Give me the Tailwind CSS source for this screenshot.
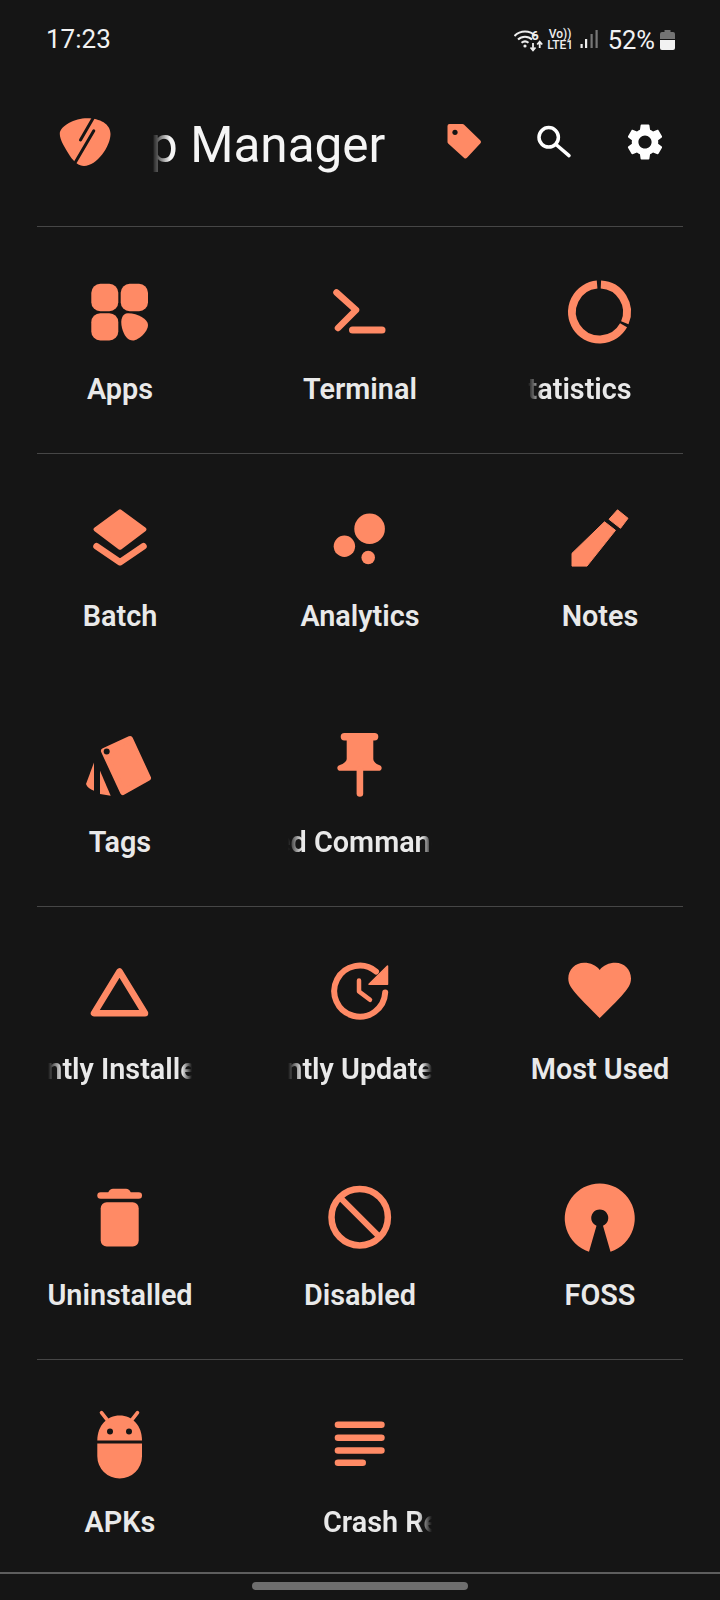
<!DOCTYPE html>
<html lang="en">
  <head>
    <meta charset="UTF-8" />
    <meta name="viewport" content="width=device-width, initial-scale=1.0" />
    <title>App Manager</title>
    <script src="https://cdn.jsdelivr.net/npm/@tailwindcss/browser@4"></script>
  </head>
  <body class="bg-[#151515]">
    <div class="w-[720px] h-[1600px] bg-[#151515] overflow-hidden font-['Roboto',sans-serif] text-[#e9e9e9]">
      <!-- Status bar -->
      <div class="h-[80px] flex items-center pl-[46px] pr-[45px]">
        <span class="mb-[2px] text-[26px] text-[#f2f2f2]">17:23</span>
        <div class="ml-auto flex items-center text-[#eeeeee]">
          <svg width="30" height="24" viewBox="0 0 30 24" fill="none" stroke="currentColor" stroke-width="2">
            <path d="M.5 8A14.5 14.5 0 0 1 21.5 8" />
            <path d="M4 11.5A10 10 0 0 1 18 11.5" />
            <path d="M7.5 14.8A5.5 5.5 0 0 1 14.5 14.8" />
            <circle cx="11" cy="18" r="1.6" fill="currentColor" stroke="none" />
            <path d="M19 15v7M16.5 19.5l2.5 2.8 2.5-2.8M25.7 20v-6.500M23.200 16.500l2.500-2.800 2.500 2.800" stroke-width="1.800" />
            <text x="21" y="11.500" font-size="13" font-weight="700" text-anchor="middle" fill="currentColor" stroke="none">6</text>
          </svg>
          <div class="ml-[4px] w-[25px] flex flex-col items-center text-[12px] leading-[11px] font-medium">
            <span>Vo))</span>
            <span>LTE1</span>
          </div>
          <svg class="ml-[7px]" width="18" height="20" viewBox="0 0 18 20">
            <rect x="0.500" y="14" width="2.200" height="4" fill="#eeeeee" />
            <rect x="5" y="9" width="2.200" height="9" fill="#eeeeee" />
            <rect x="10.500" y="4" width="2.200" height="14" fill="#777777" />
            <rect x="15.500" y="0" width="2.200" height="18" fill="#777777" />
          </svg>
          <span class="ml-[10px] text-[25.500px] text-[#f2f2f2]">52%</span>
          <svg class="ml-[5px]" width="15" height="20" viewBox="0 0 15 20">
            <path d="M4.500 0h6v2h2.500a2 2 0 0 1 2 2v5H0V4a2 2 0 0 1 2-2h2.500z" fill="#747474" />
            <path d="M0 10h15v8a2 2 0 0 1-2 2H2a2 2 0 0 1-2-2z" fill="#f2f2f2" />
          </svg>
        </div>
      </div>

      <!-- Toolbar -->
      <div class="h-[124px] mb-[22px] flex items-center pl-[44.500px]">
        <svg class="shrink-0" width="80" height="80" viewBox="0 0 80 80">
          <path d="M14.800 32C14.800 24 30 16.300 42 16.300 55 16.300 65.500 22 65.500 32 65.500 44 52 64 39 64 34 64 29 60 25 54 20 46 14.800 38 14.800 32Z" fill="#ff8a65" />
          <path d="M48.200 16L35.500 38M48.800 28.700L30.500 60" stroke="#151515" stroke-width="3" stroke-linecap="round" fill="none" />
        </svg>
        <div class="ml-[27.500px] mt-[6px] w-[240px] shrink-0 overflow-hidden whitespace-nowrap text-[49.500px] leading-[64px] text-[#f5f5f5] [mask-image:linear-gradient(to_right,transparent,black_18px)]">
          <span class="block ml-[-62px]">App Manager</span>
        </div>
        <svg class="ml-[42px] shrink-0" width="60" height="60" viewBox="0 0 60 60">
          <path d="M15.500 14H28.500L45 30 31.500 44.500 15.500 30Z" fill="#ff8a65" stroke="#ff8a65" stroke-width="4" stroke-linejoin="round" />
          <circle cx="21" cy="20.300" r="2.600" fill="#151515" />
        </svg>
        <svg class="ml-[29px] shrink-0" width="60" height="60" viewBox="0 0 60 60" fill="none" stroke="#ffffff" stroke-width="3.500" stroke-linecap="round">
          <circle cx="25.700" cy="25.300" r="9.700" />
          <path d="M33 32.500L46 43.700" />
        </svg>
        <svg class="ml-[40px] shrink-0" width="44" height="44" viewBox="0 0 24 24" fill="#ffffff">
          <path d="M19.140 12.940c.04-.3.06-.61.06-.94 0-.32-.02-.64-.07-.94l2.030-1.580c.18-.14.23-.41.12-.61l-1.920-3.320c-.12-.22-.37-.29-.59-.22l-2.390.96c-.5-.38-1.030-.7-1.620-.94l-.36-2.540c-.04-.24-.24-.41-.48-.41h-3.840c-.24 0-.43.17-.47.41l-.36 2.540c-.59.24-1.130.57-1.620.94l-2.390-.96c-.22-.08-.47 0-.59.22L2.740 8.870c-.12.21-.08.47.12.61l2.030 1.580c-.05.3-.09.63-.09.94s.02.64.07.94l-2.030 1.580c-.18.14-.23.41-.12.61l1.920 3.320c.12.22.37.29.59.22l2.390-.96c.5.38 1.030.7 1.620.94l.36 2.540c.05.24.24.41.48.41h3.840c.24 0 .44-.17.47-.41l.36-2.540c.59-.24 1.130-.56 1.620-.94l2.390.96c.22.08.47 0 .59-.22l1.920-3.320c.12-.22.07-.47-.12-.61l-2.010-1.580zM12 15.600c-1.980 0-3.600-1.620-3.600-3.600s1.620-3.600 3.600-3.600 3.600 1.620 3.600 3.600-1.620 3.600-3.600 3.600z" />
        </svg>
      </div>

      <div class="mx-[37px] h-px bg-[#464646]"></div>
      <!-- Section 1 -->
      <div class="grid grid-cols-3 auto-rows-[226px]">
        <div class="flex flex-col items-center">
          <svg class="mt-[44.500px]" width="80" height="80" viewBox="0 0 80 80" fill="#ff8a65">
            <rect x="11.300" y="11.800" width="27" height="27.400" rx="9" />
            <rect x="40.700" y="11.800" width="27.300" height="27.400" rx="9" />
            <rect x="11.300" y="41.200" width="27" height="27.300" rx="9" />
            <path d="M48 41.200C58 41.200 68 47 68 53 68 60 58 68.500 53 68.500 48 68.500 44 64 42 56 40 48 42 41.200 48 41.200Z" />
          </svg>
          <div class="mt-[17px] w-[150px] text-center text-[28.800px] leading-[40px] font-semibold whitespace-nowrap">Apps</div>
        </div>
        <div class="flex flex-col items-center">
          <svg class="mt-[44.500px]" width="80" height="80" viewBox="0 0 80 80" fill="none" stroke="#ff8a65" stroke-linecap="round" stroke-linejoin="round">
            <path d="M16.500 20.500L36 38 18 56" stroke-width="6.500" />
            <path d="M32.500 58H62" stroke-width="7" />
          </svg>
          <div class="mt-[17px] w-[150px] text-center text-[28.800px] leading-[40px] font-semibold whitespace-nowrap">Terminal</div>
        </div>
        <div class="flex flex-col items-center">
          <svg class="mt-[44.500px]" width="80" height="80" viewBox="0 0 80 80" fill="none" stroke="#ff8a65" stroke-width="8">
            <path d="M40.900 12.500A27.500 27.500 0 0 1 64.800 50.700" />
            <path d="M63.550 53.300A27.500 27.500 0 1 1 37.100 12.600" />
          </svg>
          <div class="mt-[17px] w-[144px] overflow-hidden text-[28.800px] leading-[40px] font-semibold whitespace-nowrap [mask-image:linear-gradient(to_right,transparent,black_14px,black_134px,transparent)]">
            <span class="block ml-[-18px]">Statistics</span>
          </div>
        </div>
      </div>

      <div class="mx-[37px] h-px bg-[#464646]"></div>
      <!-- Section 2 -->
      <div class="grid grid-cols-3 auto-rows-[226px]">
        <div class="flex flex-col items-center">
          <svg class="mt-[44.500px]" width="80" height="80" viewBox="0 0.700 80 80">
            <path d="M40 13L64.500 31 40 49.500 15.500 31Z" fill="#ff8a65" stroke="#ff8a65" stroke-width="4" stroke-linejoin="round" />
            <path d="M16.500 48L40 64 63.500 48" fill="none" stroke="#ff8a65" stroke-width="6.500" stroke-linecap="round" stroke-linejoin="round" />
          </svg>
          <div class="mt-[17px] w-[150px] text-center text-[28.800px] leading-[40px] font-semibold whitespace-nowrap">Batch</div>
        </div>
        <div class="flex flex-col items-center">
          <svg class="mt-[44.500px]" width="80" height="80" viewBox="0 0.700 80 80" fill="#ff8a65">
            <circle cx="49.600" cy="30.500" r="15.300" />
            <circle cx="24.400" cy="47.900" r="10.700" />
            <circle cx="48.200" cy="59.200" r="6.800" />
          </svg>
          <div class="mt-[17px] w-[150px] text-center text-[28.800px] leading-[40px] font-semibold whitespace-nowrap">Analytics</div>
        </div>
        <div class="flex flex-col items-center">
          <svg class="mt-[44.500px]" width="80" height="80" viewBox="0 0.700 80 80" fill="#ff8a65" stroke="#ff8a65" stroke-width="1" stroke-linejoin="round">
            <path d="M57.500 11.500L68 20 60.500 30 49 21Z" />
            <path d="M44.500 23.500L55.500 32 27 67.800H12V55Z" />
          </svg>
          <div class="mt-[17px] w-[150px] text-center text-[28.800px] leading-[40px] font-semibold whitespace-nowrap">Notes</div>
        </div>

        <div class="flex flex-col items-center">
          <svg class="mt-[44.500px]" width="80" height="80" viewBox="0 0 80 80" fill="#ff8a65">
            <path d="M24 26L50 14 68 53 43 67Z" stroke="#ff8a65" stroke-width="6" stroke-linejoin="round" />
            <circle cx="26.700" cy="26.500" r="3" fill="#151515" />
            <path d="M14 37.500L6 59C7 62 10 64.500 14 65.800Z" />
            <path d="M20 45.800V69L30.700 70.800Z" />
          </svg>
          <div class="mt-[17px] w-[150px] text-center text-[28.800px] leading-[40px] font-semibold whitespace-nowrap">Tags</div>
        </div>
        <div class="flex flex-col items-center">
          <svg class="mt-[44.500px]" width="80" height="80" viewBox="0 0 80 80" fill="#ff8a65">
            <rect x="20.700" y="8.100" width="37.600" height="7.400" rx="3.700" />
            <path d="M26.700 14H53.300V34C53.300 37 57 39.500 59 40 61 40.500 61.700 42 61.700 43 61.700 45 60 45.800 58.700 45.800H20.300C19 45.800 17.300 45 17.300 43 17.300 42 18 40.500 20 40 22 39.500 26.700 37 26.700 34Z" />
            <path d="M39.900 45V68.500" stroke="#ff8a65" stroke-width="6.600" stroke-linecap="round" />
          </svg>
          <div class="mt-[17px] w-[144px] overflow-hidden text-[28.800px] leading-[40px] font-semibold whitespace-nowrap [mask-image:linear-gradient(to_right,transparent,black_14px,black_134px,transparent)]">
            <span class="block ml-[-71px]">Pinned Commands</span>
          </div>
        </div>
        <div></div>
      </div>

      <div class="mx-[37px] h-px bg-[#464646]"></div>
      <!-- Section 3 -->
      <div class="grid grid-cols-3 auto-rows-[226px]">
        <div class="flex flex-col items-center">
          <svg class="mt-[44.500px]" width="80" height="80" viewBox="0 1 80 80" fill="none" stroke="#ff8a65" stroke-width="6.500" stroke-linejoin="round">
            <path d="M39.500 20.500L14 62.200H65Z" />
          </svg>
          <div class="mt-[17px] w-[144px] overflow-hidden text-[28.800px] leading-[40px] font-semibold whitespace-nowrap [mask-image:linear-gradient(to_right,transparent,black_14px,black_134px,transparent)]">
            <span class="block ml-[-66px]">Recently Installed</span>
          </div>
        </div>
        <div class="flex flex-col items-center">
          <svg class="mt-[44.500px]" width="80" height="80" viewBox="0 1 80 80" fill="none" stroke="#ff8a65">
            <path d="M56 20.500A25.500 25.500 0 1 0 65.200 41.500" stroke-width="6" stroke-linecap="round" />
            <path d="M67.500 15V33.300H49Z" fill="#ff8a65" stroke-width="1.500" stroke-linejoin="round" />
            <path d="M39 29.500V40.500L50 48.800" stroke-width="4.500" stroke-linecap="round" stroke-linejoin="round" />
          </svg>
          <div class="mt-[17px] w-[144px] overflow-hidden text-[28.800px] leading-[40px] font-semibold whitespace-nowrap [mask-image:linear-gradient(to_right,transparent,black_14px,black_134px,transparent)]">
            <span class="block ml-[-66px]">Recently Updated</span>
          </div>
        </div>
        <div class="flex flex-col items-center">
          <svg class="mt-[44.500px]" width="80" height="80" viewBox="0 1 80 80" fill="#ff8a65">
            <path d="M39.700 67.200C38 65 26 54 18 45 12 38 8.300 34 8.300 27.500 8.300 18.500 15.500 11.800 24 11.800 30.500 11.800 36.500 14.500 39.700 19 43 14.500 49 11.800 55.500 11.800 64 11.800 71 18.500 71 27.500 71 34 67.500 38 61.500 45 53.500 54 41.500 65 39.700 67.200Z" />
          </svg>
          <div class="mt-[17px] w-[150px] text-center text-[28.800px] leading-[40px] font-semibold whitespace-nowrap">Most Used</div>
        </div>

        <div class="flex flex-col items-center">
          <svg class="mt-[44.500px]" width="80" height="80" viewBox="0 0.700 80 80" fill="#ff8a65">
            <rect x="17.300" y="14.900" width="44.700" height="6.600" rx="3.300" />
            <path d="M28 16C29 12.500 31 11.500 33 11.500H46C48 11.500 50 12.500 51 16Z" />
            <rect x="20.700" y="24.900" width="38" height="44.300" rx="6" />
          </svg>
          <div class="mt-[17px] w-[150px] text-center text-[28.800px] leading-[40px] font-semibold whitespace-nowrap">Uninstalled</div>
        </div>
        <div class="flex flex-col items-center">
          <svg class="mt-[44.500px]" width="80" height="80" viewBox="0 0.700 80 80" fill="none" stroke="#ff8a65" stroke-width="6.500">
            <circle cx="39.700" cy="39.900" r="28.200" />
            <path d="M19.700 19.900L59.700 59.900" stroke-width="6" />
          </svg>
          <div class="mt-[17px] w-[150px] text-center text-[28.800px] leading-[40px] font-semibold whitespace-nowrap">Disabled</div>
        </div>
        <div class="flex flex-col items-center">
          <svg class="mt-[44.500px]" width="80" height="80" viewBox="0 0.700 80 80" fill="#ff8a65">
            <path d="M29 74.500A35 35 0 1 1 50.500 74.500L43 48.500A8.500 8.500 0 1 0 36.500 48.500Z" />
          </svg>
          <div class="mt-[17px] w-[150px] text-center text-[28.800px] leading-[40px] font-semibold whitespace-nowrap">FOSS</div>
        </div>
      </div>

      <div class="mx-[37px] h-px bg-[#464646]"></div>
      <!-- Section 4 -->
      <div class="grid grid-cols-3 auto-rows-[212px]">
        <div class="flex flex-col items-center">
          <svg class="mt-[44.500px]" width="80" height="80" viewBox="0 1.300 80 80" fill="#ff8a65">
            <path d="M17.300 36.800C17.300 22 27 11.800 39.700 11.800 52.400 11.800 62 22 62 36.800Z" />
            <path d="M17.300 39.700H62V52.500A22.350 22.350 0 0 1 17.300 52.500Z" />
            <path d="M21.500 9L27 16M57.500 9L52 16" stroke="#ff8a65" stroke-width="3.600" stroke-linecap="round" />
            <circle cx="30" cy="27.800" r="3" fill="#151515" />
            <circle cx="49" cy="27.800" r="3" fill="#151515" />
          </svg>
          <div class="mt-[17px] w-[150px] text-center text-[28.800px] leading-[40px] font-semibold whitespace-nowrap">APKs</div>
        </div>
        <div class="flex flex-col items-center">
          <svg class="mt-[44.500px]" width="80" height="80" viewBox="0 1.300 80 80" fill="#ff8a65">
            <rect x="14.700" y="17.800" width="50" height="6.600" rx="3.300" />
            <rect x="14.700" y="30.800" width="50" height="6.600" rx="3.300" />
            <rect x="14.700" y="43.500" width="50" height="6.600" rx="3.300" />
            <rect x="14.700" y="55.800" width="31.300" height="6.600" rx="3.300" />
          </svg>
          <div class="mt-[17px] w-[144px] overflow-hidden text-[28.800px] leading-[40px] font-semibold whitespace-nowrap [mask-image:linear-gradient(to_right,black_130px,transparent)]">
            <span class="block ml-[35px]">Crash Reports</span>
          </div>
        </div>
        <div></div>
      </div>

      <!-- Navigation bar -->
      <div class="h-[28px] border-t-2 border-[#5e5e5e] flex justify-center pt-[8px]">
        <div class="w-[216px] h-[8px] rounded-full bg-[#6e6e6e]"></div>
      </div>
    </div>
  </body>
</html>
